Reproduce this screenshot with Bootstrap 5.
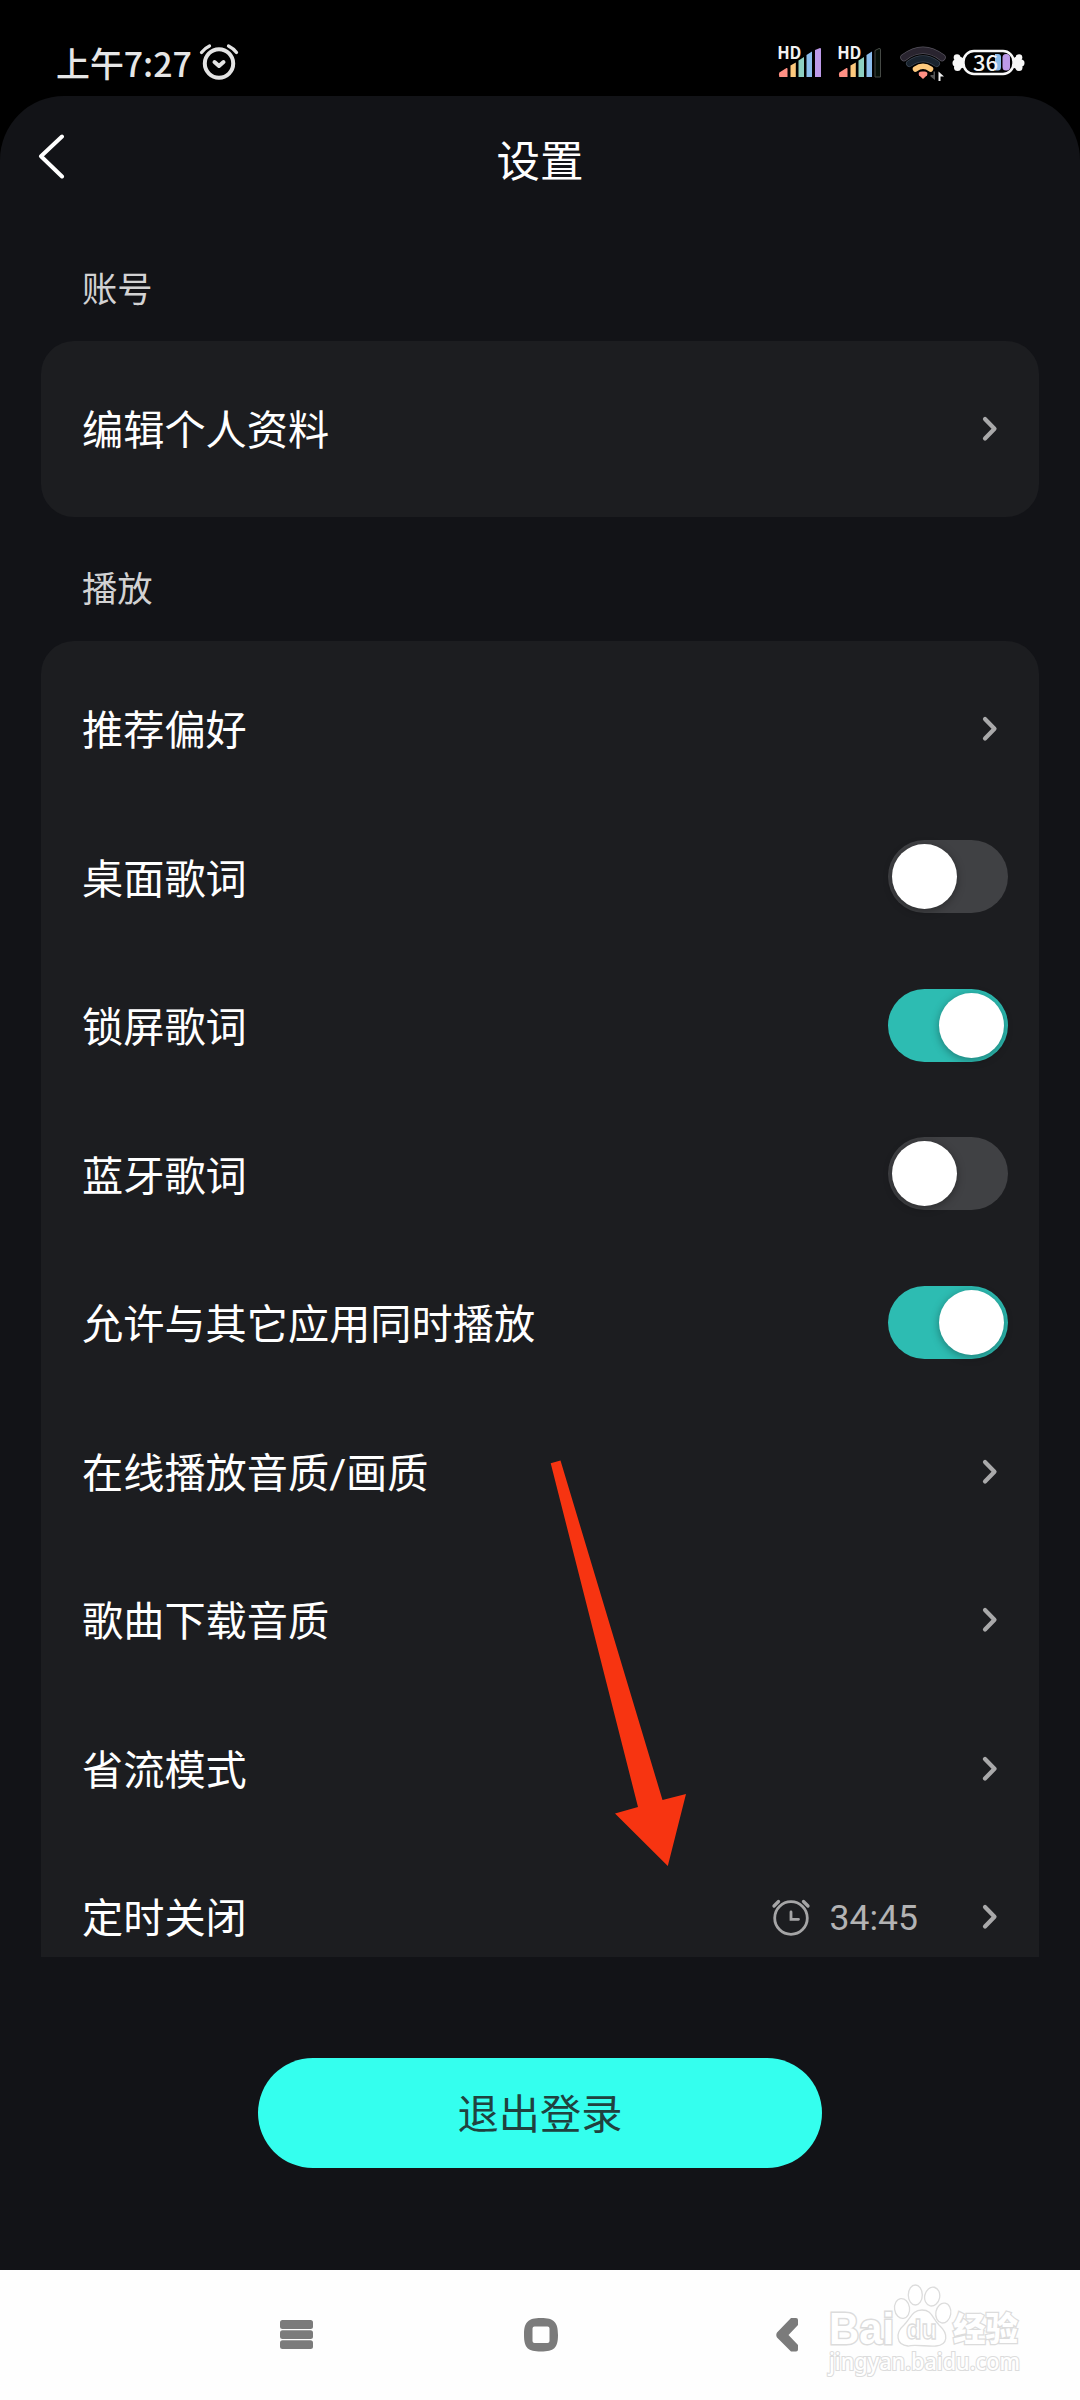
<!DOCTYPE html>
<html lang="zh-CN" data-bs-theme="dark">
<head>
<meta charset="utf-8">
<meta name="viewport" content="width=device-width, initial-scale=1">
<title>设置</title>
<link href="https://cdn.jsdelivr.net/npm/bootstrap@5.3.0/dist/css/bootstrap.min.css" rel="stylesheet">
<style>
  body { background: #000; font-family: Roboto, "Noto Sans CJK SC", sans-serif; color: #fff; }
  .phone { width: 1080px; height: 2400px; background: #000; overflow: hidden; }
  .statusbar { height: 96px; padding: 0 55px 0 56px; flex: none; }
  .clock { font: 500 33.9px/34px "Noto Sans CJK SC", sans-serif; color: #e6e6e6; margin-top: 46px; }
  .clock-bell { margin: 42px 0 0 6px; }
  .status-icons { margin: 34px 0 0; }
  .app { background: #121317; border-radius: 64px 64px 0 0; height: 2174px; flex: none; }
  .titlebar { height: 128px; flex: none; }
  .titlebar h1 { font-size: 43.5px; line-height: 60px; font-weight: 400; margin: 0; padding-top: 5px; }
  .back { left: 36px; top: 38px; }
  .group-label { font-size: 35.3px; line-height: 40px; color: #d2d2d3; margin: 0 0 31px 82px; font-weight: 400; }
  .group-card { background: #1c1d20; border-radius: 33px; margin: 0 41px; padding: 14px 0 13px; flex: none; }
  .group-card.cut { border-radius: 33px 33px 0 0; height: 1316px; overflow: hidden; padding-top: 15px; }
  .setting { height: 148.5px; padding: 0 31px 0 41px; background: transparent; color: #fff; font-size: 41.2px; line-height: 60px; }
  .setting > span { padding-top: 3px; }
  .chev { margin: -1px 10px 0 0; flex: none; }
  .form-check-input.toggle { width: 120px; height: 73px; margin: -3px 0 0; border: 0; border-radius: 37px; flex: none; background: #404144; padding: 4px; box-shadow: none; }
  .form-check-input.toggle:checked { background: #2dbcb2; }
  .toggle::before { content: ""; display: block; width: 65px; height: 65px; border-radius: 50%; background: #fff; box-shadow: 0 2px 9px rgba(0,0,0,.35); }
  .toggle:checked::before { margin-left: 47px; }
  .setting > .timer { font-size: 35.5px; color: #b3b3b4; margin-right: 64px; padding-top: 0; }
  .bell { margin: -2px 19px 0 0; }
  .logout { width: 564px; height: 110px; margin-top: 101px; border-radius: 55px; background: #34ffee; color: #20423f; font-size: 41.2px; line-height: 60px; border: 0; padding: 5px 0 0; }
  .logout:hover { background: #34ffee; color: #20423f; }
  .sysnav { height: 130px; background: #fefefe; flex: none; }
  .sysnav .keys { width: 798px; padding-left: 280px; height: 98px; padding-top: 13px; }
  .home-key { margin-left: -8px; }
  .baidu { left: 822px; top: 2276px; }
  .pointer-arrow { left: 520px; top: 1430px; }
</style>
</head>
<body>
<svg width="0" height="0" class="position-absolute">
  <symbol id="chev" viewBox="0 0 16 26"><path d="M3 3 L12.500 12.700 L3 22.500" fill="none" stroke="#a9a9aa" stroke-width="4.200" stroke-linecap="round" stroke-linejoin="round"/></symbol>
  <symbol id="bars" viewBox="0 0 44 34">
    <path d="M1.300 25.500 L8.500 21 Q9.500 20.500 9.500 22 V30 H1.300 Q0.500 27 1.300 25.500Z" fill="#ff8f83"/>
    <path d="M12.500 18.500 L17.800 15.500 V30 H12.500Z" fill="#fdc97d"/>
    <path d="M20.500 13.500 L26 10 V30 H20.500Z" fill="#8dd0c1"/>
    <path d="M28.500 8 L34 4.500 V30 H28.500Z" fill="#8bbdec"/>
  </symbol>
</svg>
<main class="phone position-relative d-flex flex-column">
  <header class="statusbar d-flex align-items-start">
    <span class="clock">上午7:27</span>
    <svg class="clock-bell" width="42" height="42" viewBox="0 0 42 42" fill="none" stroke="#e3e3e3" stroke-width="4" stroke-linecap="round" stroke-linejoin="round">
      <circle cx="21" cy="21.500" r="14.200"/><path d="M16.500 20 L21 24 L25.500 20"/><path d="M3.500 10.500 Q7 6 11.500 4 M30.500 4 Q35.500 6.500 38.500 10.500" stroke-width="3.300"/>
    </svg>
    <svg class="status-icons ms-auto" width="248" height="52" viewBox="777 34 248 52">
      <use href="#bars" x="778" y="47" width="44" height="34"/>
      <path d="M815 50 L820 48 Q821 48 821 49 V77 H815Z" fill="#bd9ae9"/>
      <use href="#bars" x="838" y="47" width="44" height="34"/>
      <path d="M875 50.500 L879 48.500 Q880.500 48 880.500 50 V77 H875Z" fill="#061008" stroke="#454945"/>
      <g font-family="Noto Sans CJK SC, sans-serif" font-weight="700" font-size="16.500" fill="#f2f2f2" stroke="#000" stroke-width="1" paint-order="stroke"><text x="777.200" y="59" textLength="24">HD</text><text x="837.200" y="59" textLength="24">HD</text></g>
      <g fill="none" stroke-linecap="round">
        <path d="M904 57.500 Q923 43 942 57.500" stroke="#55525c" stroke-width="7.500"/>
        <path d="M904 57.500 Q923 43 942 57.500" stroke="#29242f" stroke-width="6"/>
        <path d="M909.500 63.500 Q923 54 936.500 63.500" stroke="#3c4654" stroke-width="7"/>
        <path d="M909.500 63.500 Q923 54 936.500 63.500" stroke="#19232e" stroke-width="5.500"/>
        <path d="M915.500 69 Q923 63.500 930.500 69" stroke="#fdc97d" stroke-width="5.500"/>
      </g>
      <path d="M923 79 L919 75.300 Q917.500 71.500 922 71.500 H925 Q928.500 72 927 75.300Z" fill="#ff8f83"/>
      <path d="M935 71.500 V80 L930.500 76.500 V75 H933.500 V71.500Z" fill="#555"/>
      <path d="M938.500 81 V71.500 L944 76.500 H940.500 V81Z" fill="#eee"/>
      <g fill="#f7f7f7"><circle cx="957" cy="57.500" r="3.300"/><circle cx="956" cy="63" r="3.500"/><circle cx="957.500" cy="67.500" r="3.500"/><path d="M957 55 L965 59 V67 L957 70Z"/>
      <circle cx="1019" cy="57.500" r="3.300"/><circle cx="1021" cy="63" r="3.500"/><circle cx="1019" cy="67.500" r="3.500"/><path d="M1019 55 L1012 59 V67 L1019 70Z"/></g>
      <rect x="963.500" y="51" width="50" height="23" rx="10.500" fill="#000" stroke="#f7f7f7" stroke-width="2.500"/>
      <path d="M995 54 H998 Q1001 54 1001 57 V67 Q1001 70.500 998 70.500 H995Z" fill="#8bbdec"/>
      <rect x="1002.500" y="54" width="7.500" height="16.500" rx="3.500" fill="#bd9ae9"/>
      <text x="973" y="70.500" font-family="Noto Sans CJK SC, sans-serif" font-size="21" font-weight="500" textLength="25" lengthAdjust="spacingAndGlyphs" fill="#f3f3f3">36</text>
    </svg>
  </header>

  <section class="app d-flex flex-column">
    <div class="titlebar position-relative d-flex justify-content-center align-items-center">
      <svg class="back position-absolute" width="32" height="46" viewBox="36 134 32 46"><path d="M62 136.500 L41 156.200 L62 176.500" fill="none" stroke="#fff" stroke-width="4" stroke-linecap="round" stroke-linejoin="round"/></svg>
      <h1>设置</h1>
    </div>
    <h2 class="group-label" style="margin-top:46px">账号</h2>
    <div class="group-card">
      <div class="setting d-flex align-items-center justify-content-between"><span>编辑个人资料</span><svg class="chev" width="16" height="26"><use href="#chev"/></svg></div>
    </div>
    <h2 class="group-label" style="margin-top:53px">播放</h2>
    <div class="group-card cut">
      <div class="setting d-flex align-items-center justify-content-between"><span>推荐偏好</span><svg class="chev" width="16" height="26"><use href="#chev"/></svg></div>
      <div class="setting d-flex align-items-center justify-content-between"><span>桌面歌词</span><input class="form-check-input toggle" type="checkbox" aria-label="桌面歌词"></div>
      <div class="setting d-flex align-items-center justify-content-between"><span>锁屏歌词</span><input class="form-check-input toggle" type="checkbox" checked aria-label="锁屏歌词"></div>
      <div class="setting d-flex align-items-center justify-content-between"><span>蓝牙歌词</span><input class="form-check-input toggle" type="checkbox" aria-label="蓝牙歌词"></div>
      <div class="setting d-flex align-items-center justify-content-between"><span>允许与其它应用同时播放</span><input class="form-check-input toggle" type="checkbox" checked aria-label="允许与其它应用同时播放"></div>
      <div class="setting d-flex align-items-center justify-content-between"><span>在线播放音质/画质</span><svg class="chev" width="16" height="26"><use href="#chev"/></svg></div>
      <div class="setting d-flex align-items-center justify-content-between"><span>歌曲下载音质</span><svg class="chev" width="16" height="26"><use href="#chev"/></svg></div>
      <div class="setting d-flex align-items-center justify-content-between"><span>省流模式</span><svg class="chev" width="16" height="26"><use href="#chev"/></svg></div>
      <div class="setting d-flex align-items-center"><span class="me-auto">定时关闭</span>
        <svg width="40" height="38" viewBox="0 0 40 38" class="bell" fill="none" stroke="#a5a5a6" stroke-width="2.800" stroke-linecap="round"><circle cx="20" cy="20" r="16.300"/><path d="M20 14 V21.300 H27.500"/><path d="M3 8 L7.500 3.500 M32.500 3.500 L37 8" stroke-width="3.300"/></svg>
        <span class="timer">34:45</span><svg class="chev" width="16" height="26"><use href="#chev"/></svg></div>
    </div>
    <button class="btn logout align-self-center" type="button">退出登录</button>
  </section>

  <nav class="sysnav">
    <div class="keys d-flex justify-content-between align-items-end">
      <svg width="33" height="98" viewBox="280 2270 33 98" fill="#7b7b7b"><rect x="280" y="2320" width="33" height="9" rx="2.500"/><rect x="280" y="2330.300" width="33" height="8.700" rx="2.500"/><rect x="280" y="2340.300" width="33" height="8.700" rx="2.500"/></svg>
      <svg class="home-key" width="34" height="98" viewBox="524 2270 34 98"><path fill="#7b7b7b" fill-rule="evenodd" d="M541 2318 C554 2318 558 2322 558 2335 C558 2348 554 2351.500 541 2351.500 C528 2351.500 524 2348 524 2335 C524 2322 528 2318 541 2318Z M534.500 2326.500 Q532.500 2326.500 532.500 2328.500 V2341 Q532.500 2343 534.500 2343 H547.500 Q549.500 2343 549.500 2341 V2328.500 Q549.500 2326.500 547.500 2326.500Z"/></svg>
      <svg width="22" height="98" viewBox="776 2270 22 98"><path fill="#7b7b7b" d="M791 2318 H796 Q798 2318 798 2320 V2325 L788.500 2335 L798 2345 V2349.500 Q798 2351.500 796 2351.500 H791 L777 2337.500 Q775.500 2335 777 2332.500Z"/></svg>
    </div>
  </nav>

  <svg class="pointer-arrow position-absolute" width="180" height="450" viewBox="520 1430 180 450"><path fill="#f73411" d="M550.700 1463.300 L560.500 1460.500 L662.500 1800 L686 1794 L667.800 1866 L615 1813.500 L638 1807Z"/></svg>

  <svg class="baidu position-absolute" width="206" height="120" viewBox="822 2276 206 120" fill="#fff" stroke="#dcdcdc" stroke-width="1.300">
    <ellipse cx="915.300" cy="2295" rx="7" ry="10"/><ellipse cx="932.300" cy="2296.500" rx="7.500" ry="9.500" transform="rotate(12 932 2296)"/>
    <ellipse cx="902" cy="2308.500" rx="7.500" ry="10" transform="rotate(-8 902 2308)"/><ellipse cx="943.300" cy="2313" rx="7.500" ry="10" transform="rotate(10 943 2313)"/>
    <text x="829" y="2344" font-family="Liberation Sans, sans-serif" font-weight="700" font-size="44" textLength="65" lengthAdjust="spacingAndGlyphs" stroke-width="3" paint-order="stroke">Bai</text>
    <path d="M922 2310 C932 2310 932 2318 939 2325 C949 2334 948 2345 936 2346 C929 2347 915 2344 908 2346 C896 2345 895 2333 904 2325 C911 2318 912 2310 922 2310Z"/>
    <text x="906" y="2339" font-family="Liberation Sans, sans-serif" font-weight="700" font-size="27" textLength="31" lengthAdjust="spacingAndGlyphs">du</text>
    <text x="953" y="2341" font-family="Noto Sans CJK SC, sans-serif" font-weight="900" font-size="32.500" stroke-width="2.500" paint-order="stroke">经验</text>
    <text x="829" y="2370" font-family="Noto Sans, sans-serif" font-weight="500" font-size="23" textLength="191" lengthAdjust="spacingAndGlyphs" stroke-width="2.200" paint-order="stroke">jingyan.baidu.com</text>
  </svg>
</main>
<script src="https://cdn.jsdelivr.net/npm/bootstrap@5.3.0/dist/js/bootstrap.bundle.min.js"></script>
</body>
</html>
